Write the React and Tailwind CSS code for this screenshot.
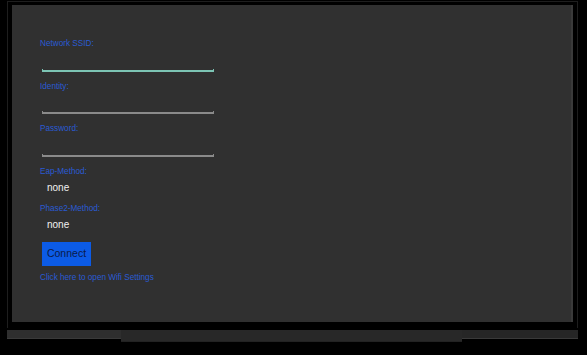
export default function App() {
  const label = "text-[8.2px] leading-[10px] text-[#2a5bd3] font-['Liberation_Sans',Arial,sans-serif]";
  const val = "text-[10px] leading-[12px] text-[#f0f0f0] pl-[7px] font-['Liberation_Sans',Arial,sans-serif]";
  const Underline = ({ color }) => (
    <div className="flex items-end w-[172px] ml-[2px] h-[3px]">
      <div className="w-[1px] h-[3px]" style={{ background: color }} />
      <div className="flex-1 h-[2px]" style={{ background: color }} />
      <div className="w-[1px] h-[3px]" style={{ background: color }} />
    </div>
  );
  return (
    <div className="w-[587px] h-[355px] bg-black pt-[1px] pl-[7px] font-['Liberation_Sans',Arial,sans-serif]">
      <div className="w-[571px] h-[327px] border-l border-t border-r border-[#1e1e1e] pl-[4px] pt-[3px] pr-[3px]">
        <div className="w-[561px] h-[317px] bg-[#303030] border-r-2 border-[#3a3a3a] pl-[28px] pt-[34px] flex flex-col">
          <div className={label}>Network SSID:</div>
          <div className="mt-[20px]"><Underline color="#7cc4b4" /></div>
          <div className={label + " mt-[10px]"}>Identity:</div>
          <div className="mt-[19px]"><Underline color="#8a8a8a" /></div>
          <div className={label + " mt-[10px]"}>Password:</div>
          <div className="mt-[20px]"><Underline color="#8a8a8a" /></div>
          <div className={label + " mt-[10px]"}>Eap-Method:</div>
          <div className={val + " mt-[5px]"}>none</div>
          <div className={label + " mt-[10px]"}>Phase2-Method:</div>
          <div className={val + " mt-[5px]"}>none</div>
          <div className="mt-[11px] ml-[2px] w-[49px] h-[24px] bg-[#0c5be6] flex items-center justify-center text-[10.5px] text-[#0a1a4a]">
            Connect
          </div>
          <div className={label + " mt-[7px]"}>Click here to open Wifi Settings</div>
        </div>
      </div>
      <div className="flex w-[571px] h-[10px] mt-[2px]">
        <div className="w-[114px] h-[9px] bg-[#2e2e2e] border-b border-[#3a3a3a]" />
        <div className="w-[341px] h-[12px] bg-[#282828] border-b border-[#222]" />
        <div className="flex-1 h-[9px] bg-[#262626] border-b border-[#3a3a3a]" />
      </div>
    </div>
  );
}
